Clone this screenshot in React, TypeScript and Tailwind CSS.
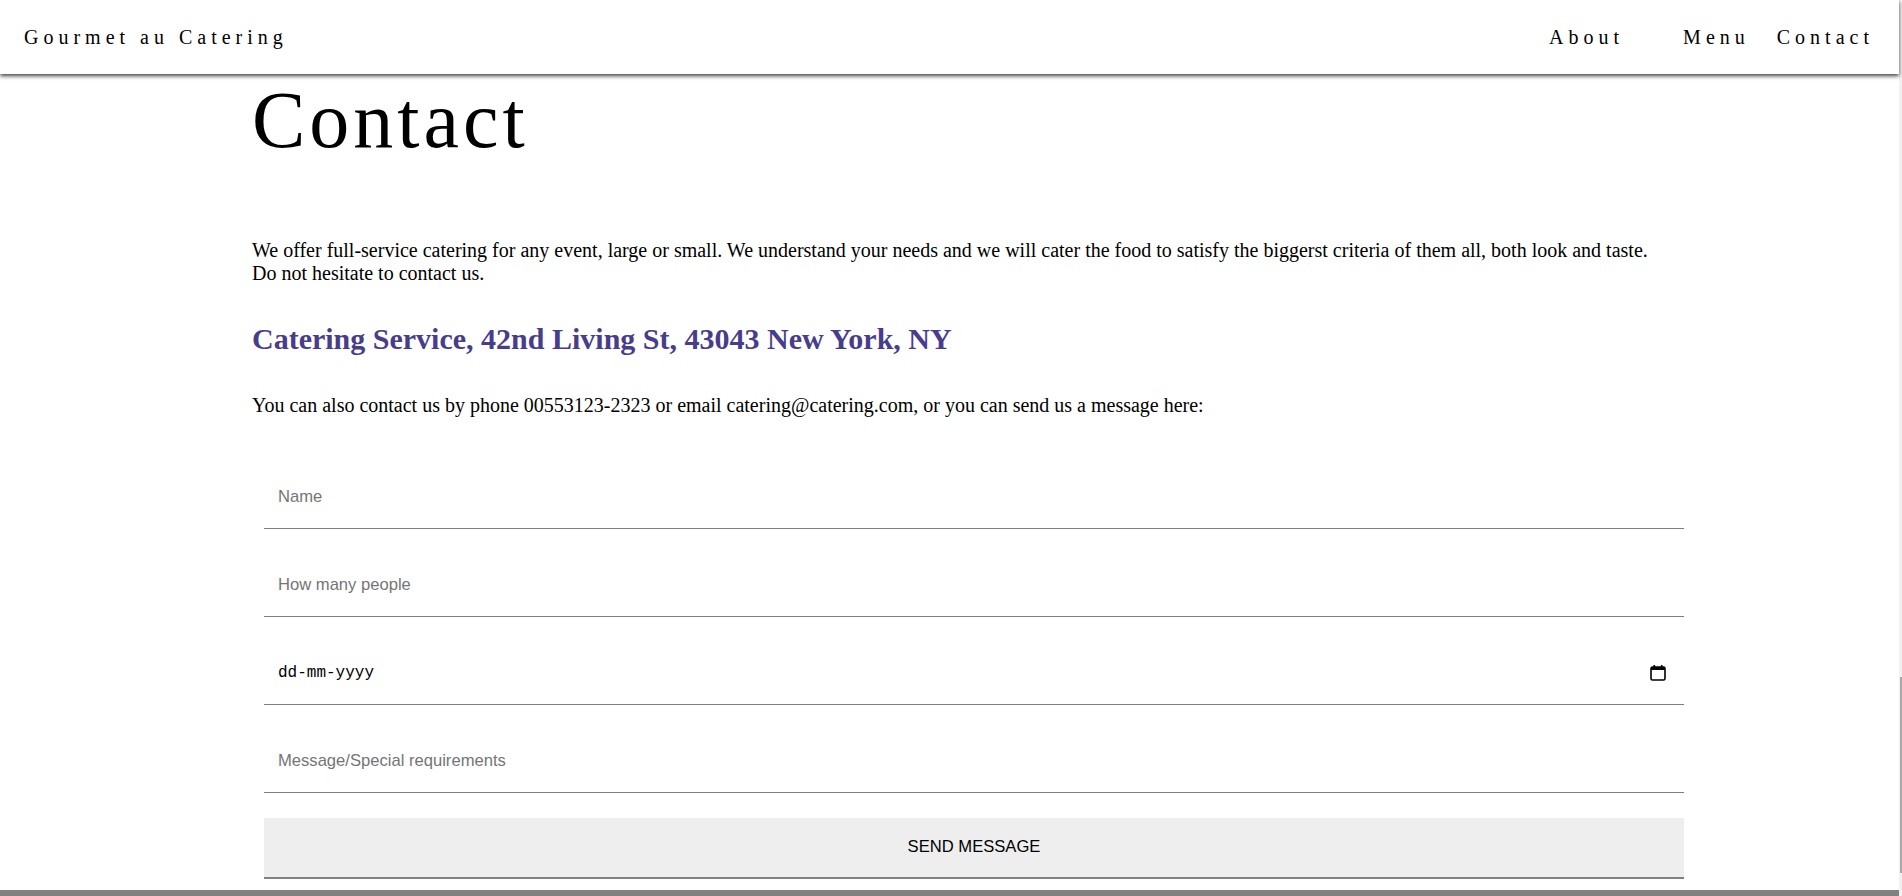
import { useState } from "react";

const fields = [
  { name: "name", placeholder: "Name" },
  { name: "people", placeholder: "How many people" },
];

function CalendarIcon() {
  return (
    <svg width="16" height="17" viewBox="0 0 16 17" fill="none">
      <rect x="1" y="3" width="14" height="13" rx="1.5" stroke="#000" strokeWidth="1.6" />
      <rect x="1" y="3" width="14" height="3" fill="#000" />
      <rect x="3.5" y="1" width="1.6" height="3" fill="#000" />
      <rect x="10.9" y="1" width="1.6" height="3" fill="#000" />
    </svg>
  );
}

export default function App() {
  const [form, setForm] = useState({ name: "", people: "", message: "" });

  return (
    <div className="flex h-[896px] overflow-hidden bg-white font-['Liberation_Serif',serif] text-black">
      <div className="flex w-[1899px] shrink-0 flex-col">
        <header className="relative z-10 flex h-[74px] shrink-0 items-center justify-between bg-white pl-[24px] pr-[25px] text-[20px] tracking-[5px] shadow-[0_2px_4px_rgba(0,0,0,0.75)]">
          <a href="#">Gourmet au Catering</a>
          <nav className="flex items-center gap-[27px]">
            <a href="#" className="mr-[32px]">
              About
            </a>
            <a href="#">Menu</a>
            <a href="#">Contact</a>
          </nav>
        </header>

        <main className="mx-auto w-[1395px] flex-1">
          <h1 className="text-[80px] leading-[92px] tracking-[4px]">Contact</h1>

          <p className="mt-[73px] whitespace-nowrap text-[20px] leading-[23px]">
            We offer full-service catering for any event, large or small. We understand your needs and we will cater the
            food to satisfy the biggerst criteria of them all, both look and taste.
            <br />
            Do not hesitate to contact us.
          </p>

          <h2 className="mt-[37px] text-[30px] font-bold leading-[34px] text-[#483d8b]">
            Catering Service, 42nd Living St, 43043 New York, NY
          </h2>

          <p className="mt-[38px] whitespace-nowrap text-[20px] leading-[23px]">
            You can also contact us by phone 00553123-2323 or email catering@catering.com, or you can send us a message
            here:
          </p>

          <form
            className="ml-[12px] mt-[48px] flex w-[1420px] flex-col gap-[24px] font-['Liberation_Sans',Arial,sans-serif] text-[16.6px]"
            onSubmit={(e) => e.preventDefault()}
          >
            {fields.map((f) => (
              <input
                key={f.name}
                placeholder={f.placeholder}
                value={form[f.name as "name" | "people"]}
                onChange={(e) => setForm({ ...form, [f.name]: e.target.value })}
                className="h-[64px] border-b border-[#808080] px-[14px] outline-none placeholder:text-[#757575]"
              />
            ))}

            <div className="flex h-[64px] items-center justify-between border-b border-[#808080] pl-[14px] pr-[18px]">
              <span className="font-['Liberation_Mono',monospace] text-[16px]">dd-mm-yyyy</span>
              <CalendarIcon />
            </div>

            <input
              placeholder="Message/Special requirements"
              value={form.message}
              onChange={(e) => setForm({ ...form, message: e.target.value })}
              className="h-[64px] border-b border-[#808080] px-[14px] outline-none placeholder:text-[#757575]"
            />

            <button className="mt-[1px] h-[61px] border-b-2 border-[#808080] bg-[#eeeeee]">SEND MESSAGE</button>
          </form>
        </main>

        <footer className="h-[6px] shrink-0 bg-[#808080]" />
      </div>

      {/* thin scrollbar strip */}
      <div className="flex w-[3px] flex-col bg-[#f1f1f1]">
        <div className="h-[677px]" />
        <div className="ml-[1px] h-[196px] w-[2px] bg-[#a8a8a8]" />
      </div>
    </div>
  );
}
